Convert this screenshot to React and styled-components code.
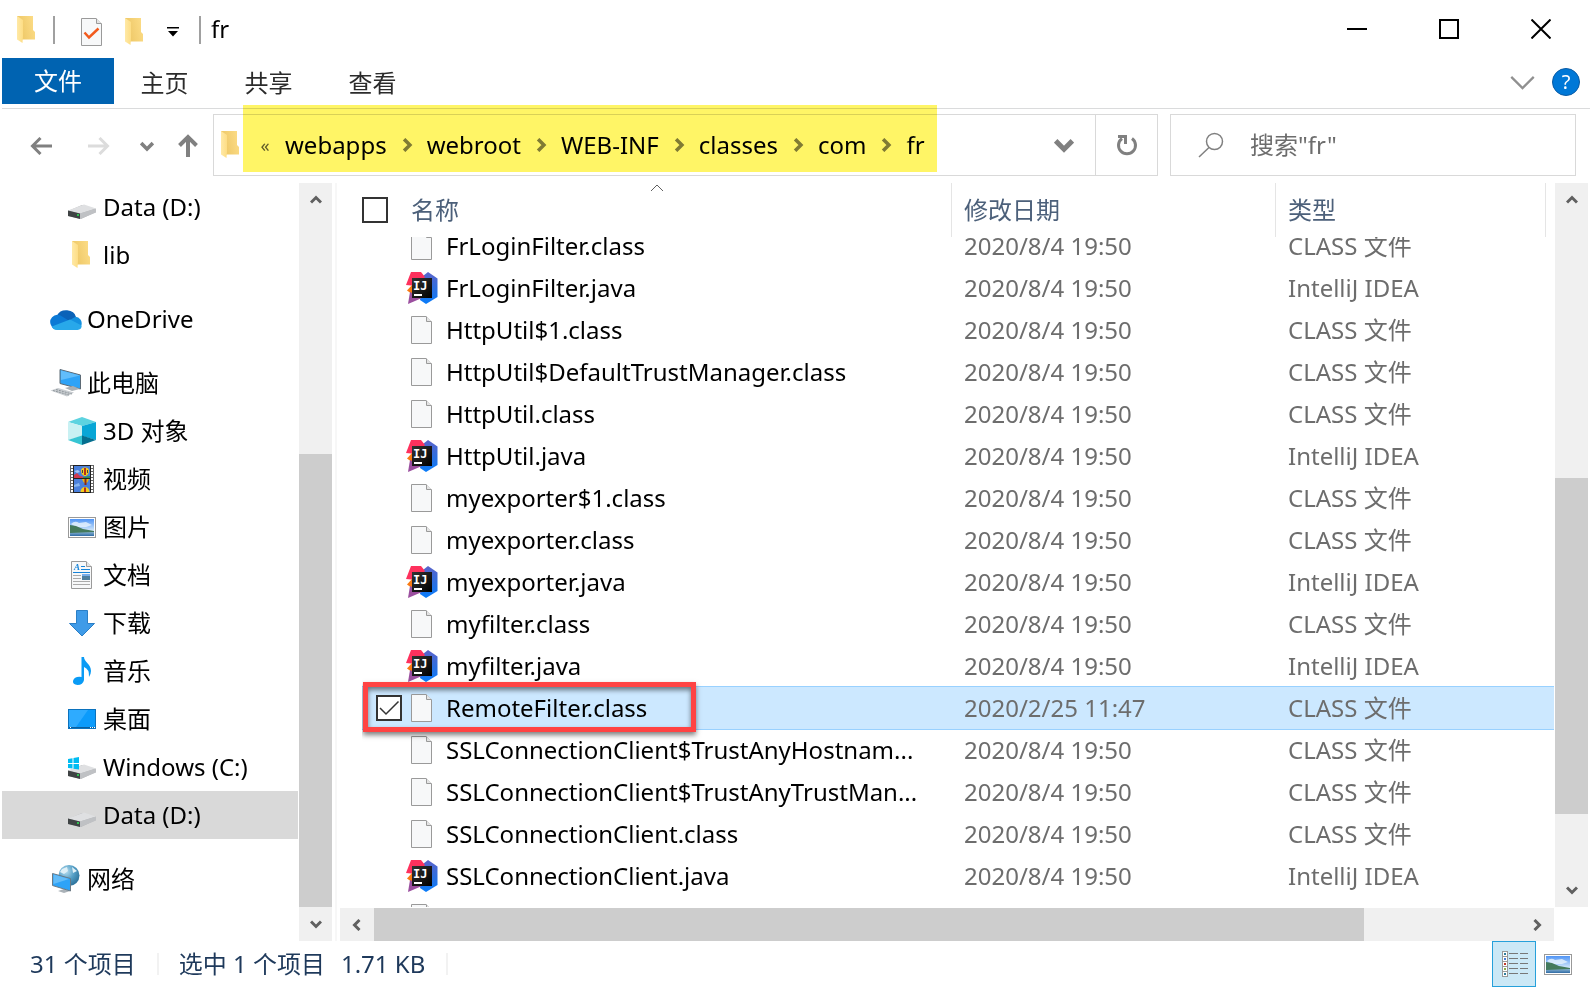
import React from "react";
import styled, { createGlobalStyle, css } from "styled-components";

const GlobalStyle = createGlobalStyle`
  * {
    box-sizing: border-box;
  }
  body {
    margin: 0;
    background: #fff;
    color: #000;
    font-family: "Noto Sans", "Noto Sans CJK SC", sans-serif;
    font-size: 24px;
    line-height: 32px;
  }
  button, input {
    font: inherit;
    color: inherit;
    margin: 0;
    padding: 0;
    border: 0;
    background: none;
  }
  ul, ol {
    list-style: none;
    margin: 0;
    padding: 0;
  }
  a {
    color: inherit;
    text-decoration: none;
  }
  svg {
    display: block;
    flex: none;
  }
`;

/* ---------- icons ---------- */

const FolderIcon = () => (
  <svg width="20" height="28" viewBox="0 0 20 28">
    <defs>
      <linearGradient id="folderBack" x1="0" x2="1" y1="0.6" y2="0.3">
        <stop offset="0" stopColor="#ecc563" />
        <stop offset="1" stopColor="#fcdc86" />
      </linearGradient>
      <linearGradient id="folderFront" x1="0" x2="1">
        <stop offset="0" stopColor="#ffe9a6" />
        <stop offset="1" stopColor="#fddd85" />
      </linearGradient>
    </defs>
    <path d="M0 0H16V14L18 16V23.500H5L0 20Z" fill="url(#folderBack)" />
    <path d="M0 0L6 4V20L5.500 27L0 23.500Z" fill="url(#folderFront)" />
  </svg>
);

const PageShape = () => (
  <>
    <path d="M0.500 0.500H15L20.500 6V27.500H0.500Z" fill="#f7f8f9" stroke="#9a9a9a" />
    <path d="M15.500 0.500V5.500H20.500" fill="#e4e4e4" stroke="#9a9a9a" />
  </>
);

const FileIcon = () => (
  <svg width="22" height="28" viewBox="0 0 22 28">
    <PageShape />
  </svg>
);

const CheckedPageIcon = () => (
  <svg width="21" height="28" viewBox="0 0 21 28">
    <PageShape />
    <path d="M3.500 14.500L8 19.500L17.500 10.500" fill="none" stroke="#f25a1d" strokeWidth="2.500" />
  </svg>
);

const IdeaIcon = () => (
  <svg width="32" height="32" viewBox="0 0 32 32">
    <defs>
      <linearGradient id="ideaBlue" x1="0" x2="0" y1="0" y2="1">
        <stop offset="0" stopColor="#5b63c9" />
        <stop offset="0.5" stopColor="#2f6fe0" />
        <stop offset="1" stopColor="#087cfa" />
      </linearGradient>
      <linearGradient id="ideaInk" x1="0" x2="1" y1="0" y2="1">
        <stop offset="0" stopColor="#333" />
        <stop offset="1" stopColor="#000" />
      </linearGradient>
    </defs>
    <path d="M17 4L22 0L31.500 6.500V25L20 32L14 28Z" fill="url(#ideaBlue)" />
    <path d="M5 0H15L19 5L10 14L0 13Z" fill="#fe315d" />
    <path d="M6 13L1 18.500L6 22Z" fill="#f97a12" />
    <path d="M4 20L2 32L16 26Z" fill="#9b4f9f" />
    <rect x="6" y="6" width="20" height="20" fill="url(#ideaInk)" />
    <text x="7" y="18" fill="#fff" fontFamily="DejaVu Sans Mono" fontWeight="700" fontSize="12">
      IJ
    </text>
    <rect x="8" y="22" width="8" height="2" fill="#fff" />
  </svg>
);

const DriveIcon = ({ windows }) => (
  <svg width="28" height="28" viewBox="0 0 28 28">
    <path d="M0 18L14 12L28 16V19L13 26L0 23Z" fill="#b5b7ba" />
    <path d="M0 17.500L16 11.500L28 15.500L12 20.500Z" fill="#dfe0e2" />
    <path d="M0 17.500L12 20.500V26L0 23Z" fill="#3f4344" />
    <path d="M12 20.500L28 15.500V19.500L12 26Z" fill="#bfc1c4" />
    <rect x="9" y="21" width="2" height="2" fill="#30c050" />
    {windows && (
      <path
        d="M0 6L4.500 5.200V10H0ZM5.500 5L11 4V10H5.500ZM0 11H4.500V15.500L0 15ZM5.500 11H11V16.500L5.500 15.700Z"
        fill="#00bcf2"
      />
    )}
  </svg>
);

const CloudIcon = () => (
  <svg width="32" height="21" viewBox="0 0 32 21">
    <path d="M7 6.500A10 8.500 0 0 1 26 8L19 14L5 9Z" fill="#0b62b8" />
    <path d="M1.500 17A7.200 7.200 0 0 1 10.500 6.500L21 13L6 20.500Q2.500 20 1.500 17Z" fill="#0b79d5" />
    <path d="M19 11.500L25.500 7.800A6.600 6.600 0 0 1 31.500 16L29 18Z" fill="#1490df" />
    <path d="M1.800 17.500L20 10.500L31.700 16.500A4.500 4.500 0 0 1 27.500 21H7Q3.500 21 1.800 17.500Z" fill="#28a8ea" />
  </svg>
);

const ComputerIcon = () => (
  <svg width="32" height="28" viewBox="0 0 32 28">
    <path d="M10 0.500L30.500 6V20L10 14.500Z" fill="#2ea3f7" stroke="#5d6a75" />
    <path d="M11 1.500L30 6.500L11 11Z" fill="#61bdfb" />
    <path d="M15 19L23 17L30 20L22 22Z" fill="#a9b0b5" />
    <path d="M0.500 21.500L8 19L24 23.500L17 27.500Z" fill="#c8ccd0" />
    <path d="M3 21.500L19 26M6 20.500L22 25" stroke="#8f979c" strokeDasharray="2 1" />
  </svg>
);

const CubeIcon = () => (
  <svg width="28" height="28" viewBox="0 0 28 28">
    <path d="M0 5L14 0L28 5L14 9Z" fill="#5dd3e0" />
    <path d="M0 5L14 9V19L0 23Z" fill="#c9f1f3" />
    <path d="M28 5L14 9V19L28 23Z" fill="#08a6d6" />
    <path d="M0 23L14 18.500V28Z" fill="#37c5d3" />
    <path d="M28 23L14 18.500V28Z" fill="#056f8f" />
  </svg>
);

const VideoIcon = () => (
  <svg width="28" height="28" viewBox="0 0 28 28">
    <rect x="2" width="24" height="28" fill="#666" />
    <path d="M4 1V28M24 1V28" stroke="#fff" strokeWidth="2" strokeDasharray="2 1" />
    <rect x="5" width="18" height="28" fill="#222" />
    <rect x="6" y="1" width="16" height="12" fill="#4a80dc" />
    <rect x="6" y="14" width="16" height="13" fill="#4a80dc" />
    <path d="M6 6L10 5L12 7L9 8Z" fill="#a4c6f6" />
    <path d="M6 10L9 8L12 11L16 12V13H6Z" fill="#d0384f" />
    <path d="M15 12L22 11V13H15Z" fill="#2f8f5a" />
    <path d="M13 6A4 3.500 0 0 1 21 6Q21 9 18 11H16Q13 9 13 6Z" fill="#f5cc1c" />
    <path d="M17 3V10" stroke="#b5301a" strokeWidth="2" />
    <path d="M14.500 5V8M19.500 5V8" stroke="#444" />
    <path d="M14 14H21Q20 17 18.500 18H16.500Q15 17 14 14Z" fill="#e8b418" />
    <path d="M17.500 14V20" stroke="#8a2b16" strokeWidth="2" />
    <path d="M6 20L11 18L12 21L6 22Z" fill="#86b4f0" />
    <path d="M12.500 27A4.500 5 0 0 1 21.500 27Z" fill="#f5cc1c" />
    <path d="M17 22.500V27" stroke="#b5301a" strokeWidth="2" />
  </svg>
);

const PictureIcon = () => (
  <svg width="28" height="21" viewBox="0 0 28 21">
    <defs>
      <linearGradient id="sky" x1="0" x2="0" y1="0" y2="1">
        <stop offset="0" stopColor="#4f94f5" />
        <stop offset="1" stopColor="#d7ebfb" />
      </linearGradient>
      <linearGradient id="lake" x1="0" x2="0" y1="0" y2="1">
        <stop offset="0" stopColor="#9fc5dd" />
        <stop offset="1" stopColor="#2f6ba5" />
      </linearGradient>
    </defs>
    <rect x="0.500" y="0.500" width="27" height="20" fill="#fff" stroke="#999" />
    <rect x="2" y="2" width="24" height="12" fill="url(#sky)" />
    <path d="M3 7Q7 3 11 6L18 5L24 8L18 10H8Z" fill="#e9f4fd" opacity="0.8" />
    <rect x="2" y="14" width="24" height="5" fill="url(#lake)" />
    <path d="M2 8L8 9L15 12L26 14V15L2 16Z" fill="#447a5c" />
  </svg>
);

const DocumentIcon = () => (
  <svg width="22" height="28" viewBox="0 0 22 28">
    <PageShape />
    <text x="3" y="9" fill="#1683d8" fontFamily="Liberation Serif" fontStyle="italic" fontWeight="700" fontSize="9">
      A
    </text>
    <path d="M10 5.500H14M10 8.500H19M2 11.500H19" stroke="#1683d8" />
    <path d="M2 14.500H10M2 17.500H10M2 20.500H19M2 23.500H19" stroke="#aaa" />
    <rect x="11" y="13" width="8" height="6" fill="#4f7f9f" />
    <rect x="11" y="13" width="8" height="2" fill="#79aeea" />
  </svg>
);

const DownloadIcon = () => (
  <svg width="28" height="28" viewBox="0 0 28 28">
    <path d="M8.500 1.500H19.500V14.500H26.500L14 27L1.500 14.500H8.500Z" fill="#3f9be8" stroke="#2b7fc6" />
  </svg>
);

const MusicIcon = () => (
  <svg width="28" height="28" viewBox="0 0 28 28">
    <path
      d="M13.500 0H16C16 5 23 7 23 14Q23 17 21 20Q21.500 12 16 10V23Q15 28 9.500 28Q4.500 27.500 5 24Q6.500 19 13.500 20Z"
      fill="#0a9bf5"
    />
  </svg>
);

const DesktopIcon = () => (
  <svg width="28" height="20" viewBox="0 0 28 20">
    <rect x="0.500" y="0.500" width="27" height="19" fill="#0c9bfb" stroke="#0b72bd" />
    <path d="M1 1H20L8 18H1Z" fill="#2eabff" />
    <path d="M1 18.500H27" stroke="#0a5f9e" />
    <path d="M2 18.500H3M22 18.500H23M24 18.500H25M26 18.500H27" stroke="#fff" />
  </svg>
);

const NetworkIcon = () => (
  <svg width="28" height="28" viewBox="0 0 28 28">
    <defs>
      <radialGradient id="globe" cx="0.35" cy="0.3" r="0.8">
        <stop offset="0" stopColor="#b9dff0" />
        <stop offset="0.5" stopColor="#559fc6" />
        <stop offset="1" stopColor="#256a93" />
      </radialGradient>
    </defs>
    <circle cx="17" cy="10.500" r="10.500" fill="url(#globe)" />
    <path d="M10 4L15 2L16 6L12 9L8 7ZM20 2L25 6L21 8Z" fill="#dff0f7" />
    <path d="M6 26L12 24L18 26L12 28Z" fill="#aab2b8" />
    <path d="M0.500 8.500L18.500 13.500V26L0.500 20.500Z" fill="#2ea3f7" stroke="#6b7a85" />
    <path d="M1.500 9.500L17 14L1.500 19Z" fill="#63bcf8" />
  </svg>
);

const Chevron = ({ turn = 0, size = 12, color = "#606060", weight = 3 }) => (
  <svg width={size} height={size} viewBox="0 0 12 12">
    <path
      d="M1 3.500L6 8.500L11 3.500"
      fill="none"
      stroke={color}
      strokeWidth={weight}
      transform={`rotate(${turn} 6 6)`}
    />
  </svg>
);

const BackArrow = () => (
  <svg width="22" height="18" viewBox="0 0 22 18">
    <path d="M22 9H3M10.500 1L2.500 9L10.500 17" fill="none" stroke="#808080" strokeWidth="3" />
  </svg>
);

const ForwardArrow = () => (
  <svg width="22" height="18" viewBox="0 0 22 18">
    <path d="M0 9H19M11.500 1L19.500 9L11.500 17" fill="none" stroke="#dcdcdc" strokeWidth="3" />
  </svg>
);

const UpArrow = () => (
  <svg width="20" height="24" viewBox="0 0 20 24">
    <path d="M10 23V3M1.500 11.500L10 3L18.500 11.500" fill="none" stroke="#808080" strokeWidth="4" />
  </svg>
);

const RefreshIcon = () => (
  <svg width="22" height="22" viewBox="0 0 22 22">
    <path d="M16 4.500A8.500 8.500 0 1 1 6 4.500" fill="none" stroke="#808080" strokeWidth="3" />
    <path d="M2 2.500H9.500V10" fill="none" stroke="#808080" strokeWidth="3" />
  </svg>
);

const SearchIcon = () => (
  <svg width="26" height="26" viewBox="0 0 26 26">
    <circle cx="16.500" cy="9.500" r="8" fill="none" stroke="#808080" strokeWidth="1.500" />
    <path d="M11 15.500L1 25" stroke="#808080" strokeWidth="1.500" />
  </svg>
);

const DetailsIcon = () => (
  <svg width="28" height="28" viewBox="0 0 28 28">
    {["#2f7f9f", "#4a7fd8", "#c0392b", "#8ab04a", "#2f7f9f"].map((c, i) => (
      <g key={i}>
        <rect x="2.500" y={1.5 + i * 5} width="5" height="5" fill="#fff" stroke="#999" />
        <rect x="4" y={3 + i * 5} width="2" height="2" fill={c} />
        <path d={`M9 ${3.5 + i * 5}H18M20 ${3.5 + i * 5}H28`} stroke="#777" />
      </g>
    ))}
  </svg>
);

/* ---------- window chrome ---------- */

const Window = styled.div`
  display: flex;
  flex-direction: column;
  height: 100vh;
  padding-left: 2px;
  overflow: hidden;
`;

const TitleBar = styled.header`
  display: flex;
  justify-content: space-between;
  height: 58px;
`;

const QuickAccess = styled.div`
  display: flex;
  align-items: center;
  padding: 2px 0 0 15px;
`;

const QuickButton = styled.button`
  display: flex;
  margin-left: ${({ $gap }) => $gap}px;
  padding-top: 4px;
`;

const Separator = styled.span`
  width: 2px;
  height: 28px;
  background: #a0a0a0;
  margin: 0 ${({ $after }) => $after}px 0 ${({ $before }) => $before}px;
`;

const WindowTitle = styled.h1`
  margin: 0;
  font-size: 24px;
  font-weight: 400;
  line-height: 32px;
  padding-bottom: 2px;
`;

const WindowButtons = styled.div`
  display: flex;
  padding-right: 3px;
`;

const WindowButton = styled.button`
  display: grid;
  place-items: center;
  width: 92px;
  height: 58px;
`;

const Ribbon = styled.nav`
  display: flex;
  height: 51px;
  border-bottom: 1px solid #dadbdc;
`;

const Tab = styled.button`
  width: ${({ $active }) => ($active ? 112 : 104)}px;
  height: ${({ $active }) => ($active ? 46 : 50)}px;
  padding-right: ${({ $active }) => ($active ? 0 : 3)}px;
  background: ${({ $active }) => ($active ? "#0063b1" : "transparent")};
  color: ${({ $active }) => ($active ? "#fff" : "#2b2b2b")};
`;

const RibbonTools = styled.div`
  display: flex;
  align-items: center;
  gap: 16px;
  margin-left: auto;
  padding: 0 10px 2px 0;
`;

const PlainButton = styled.button`
  display: grid;
  place-items: center;
`;

const HelpButton = styled.button`
  width: 28px;
  height: 28px;
  border: 1px solid #0a5ba5;
  border-radius: 50%;
  background: #0078d7;
  color: #fff;
  font-size: 20px;
  line-height: 26px;
`;

/* ---------- address row ---------- */

const AddressRow = styled.div`
  display: flex;
  align-items: center;
  height: 74px;
  padding: 0 14px 2px 0;
`;

const NavButtons = styled.div`
  display: flex;
  align-items: center;
  width: 211px;
  padding: 2px 0 0 28px;
`;

const NavButton = styled.button`
  display: grid;
  place-items: center;
  margin-right: ${({ $gap }) => $gap}px;
`;

const AddressBar = styled.div`
  display: flex;
  align-items: center;
  flex: 1 1 0;
  height: 62px;
  border: 1px solid #d9d9d9;
  padding-left: 7px;
`;

const Breadcrumb = styled.nav`
  position: relative;
  display: flex;
  align-items: center;
  height: 60px;
  margin-left: 2px;
  padding: 0 12px 0 17px;

  &::after {
    content: "";
    position: absolute;
    inset: -10px 0 3px 0;
    background: #fff566;
    mix-blend-mode: multiply;
    pointer-events: none;
  }
`;

const Overflow = styled.button`
  width: 10px;
  margin-right: 15px;
  color: #606060;
  font-size: 18px;
`;

const Crumbs = styled.ol`
  display: flex;
`;

const Crumb = styled.li`
  display: flex;
  align-items: center;

  svg {
    margin: 0 13px;
  }
`;

const AddressButton = styled.button`
  display: grid;
  place-items: center;
  align-self: stretch;
  width: 62px;
  border-left: ${({ $divided }) => ($divided ? "1px solid #d9d9d9" : "0")};
  margin-left: ${({ $push }) => ($push ? "auto" : "0")};
`;

const SearchBox = styled.label`
  display: flex;
  align-items: center;
  gap: 26px;
  width: 406px;
  height: 62px;
  margin-left: 12px;
  padding-left: 27px;
  border: 1px solid #d9d9d9;

  input {
    flex: 1;
    min-width: 0;
    outline: none;
  }
  input::placeholder {
    color: #6d6d6d;
    opacity: 1;
  }
`;

/* ---------- scroll bars ---------- */

const ScrollTrack = styled.div`
  display: flex;
  flex: none;
  flex-direction: ${({ $horizontal }) => ($horizontal ? "row" : "column")};
  background: #f0f0f0;
  ${({ $horizontal }) => ($horizontal ? "height: 33px;" : "width: 33px;")}
`;

const ScrollButton = styled.button`
  display: grid;
  place-items: center;
  flex: none;
  min-width: 33px;
  min-height: 33px;
  flex-basis: 34px;
`;

const ScrollPart = styled.div`
  flex: ${({ $size }) => $size} 1 0;
  background: ${({ $thumb }) => ($thumb ? "#cdcdcd" : "transparent")};
`;

const Scroller = ({ horizontal, before, thumb, after }) => (
  <ScrollTrack $horizontal={horizontal}>
    <ScrollButton aria-label="scroll back">
      <Chevron turn={horizontal ? 90 : 180} />
    </ScrollButton>
    <ScrollPart $size={before} />
    <ScrollPart $size={thumb} $thumb />
    <ScrollPart $size={after} />
    <ScrollButton aria-label="scroll forward">
      <Chevron turn={horizontal ? -90 : 0} />
    </ScrollButton>
  </ScrollTrack>
);

/* ---------- body ---------- */

const Body = styled.div`
  display: flex;
  flex: 1;
  min-height: 0;
`;

const Sidebar = styled.nav`
  display: flex;
  width: 335px;
  padding-right: 3px;
  border-right: 2px solid #f7f7f7;
`;

const Tree = styled.ul`
  flex: 1;
  margin-right: 1px;
  overflow: hidden;
`;

const TreeItem = styled.li`
  margin-top: ${({ $root }) => ($root ? 16 : 0)}px;

  a {
    display: flex;
    align-items: center;
    height: 48px;
    padding-left: ${({ $root }) => ($root ? 48 : 66)}px;
    gap: ${({ $root }) => ($root ? 5 : 7)}px;
    background: ${({ $current }) => ($current ? "#d9d9d9" : "transparent")};
  }
`;

const TreeIcon = styled.span`
  display: grid;
  place-items: center;
  width: ${({ $root }) => ($root ? 32 : 28)}px;
`;

const Main = styled.main`
  display: flex;
  flex: 1;
  flex-direction: column;
  gap: 1px;
  min-width: 0;
  padding: 0 2px 0 3px;
`;

const ListArea = styled.div`
  display: flex;
  flex: 1;
  gap: 1px;
  min-height: 0;
`;

const HorizontalArea = styled.div`
  padding-right: 34px;
`;

const Table = styled.table`
  display: flex;
  flex: 1;
  flex-direction: column;
  min-width: 0;
  padding-left: 22px;
`;

const columns = css`
  display: grid;
  grid-template-columns: minmax(0, 1fr) 324px 270px 8px;
`;

const TableHead = styled.thead`
  display: block;
  flex: none;

  tr {
    ${columns}
  }
`;

const HeadCell = styled.th`
  position: relative;
  display: flex;
  align-items: center;
  height: 54px;
  padding-left: ${({ $first }) => ($first ? 0 : 12)}px;
  border-right: 1px solid #e5e5e5;
  color: #4c607a;
  font-weight: 400;

  button {
    margin-left: ${({ $first }) => ($first ? 23 : 0)}px;
  }
`;

const SortMark = styled.span`
  position: absolute;
  top: 0;
  left: 50%;
  transform: translateX(-50%);
`;

const TableBody = styled.tbody`
  display: block;
  flex: 1;
  min-height: 0;
  overflow: hidden;

  tr:first-child {
    margin-top: -12px;
  }
`;

const Row = styled.tr`
  ${columns}
  position: relative;
  height: 42px;
  align-items: center;
  ${({ $selected }) =>
    $selected &&
    css`
      background: #cce8ff;
      box-shadow: 0 -1px #99d1ff, 0 1px #99d1ff;
    `}
`;

const Cell = styled.td`
  display: block;
  padding: 0 0 0 12px;
  color: #6d6d6d;
  white-space: nowrap;
`;

const NameCell = styled(Cell)`
  display: flex;
  align-items: center;
  padding-left: 14px;
  color: #000;
`;

const CheckSlot = styled.span`
  width: 30px;
`;

const IconSlot = styled.span`
  display: grid;
  place-items: center;
  width: 32px;
  margin-right: 8px;
`;

const Callout = styled.span`
  position: absolute;
  top: -5px;
  left: 1px;
  width: 333px;
  height: 50px;
  border: 5px solid #ff4343;
  box-shadow: 0 3px 5px rgba(0, 0, 0, 0.5), inset 0 3px 5px rgba(0, 0, 0, 0.5);
  pointer-events: none;
  z-index: 1;
`;

const CheckBoxWrap = styled.span`
  display: grid;
  width: 26px;
  height: 26px;

  input,
  svg {
    grid-area: 1 / 1;
  }
  input {
    appearance: none;
    width: 26px;
    height: 26px;
    border: 2px solid #333;
    background: #fff;
  }
  svg {
    pointer-events: none;
  }
`;

const CheckBox = ({ label, checked }) => (
  <CheckBoxWrap>
    <input type="checkbox" aria-label={label} defaultChecked={checked} />
    {checked && (
      <svg width="26" height="26" viewBox="0 0 26 26">
        <path d="M4 13L10 19L22.500 6.500" fill="none" stroke="#333" strokeWidth="1.500" />
      </svg>
    )}
  </CheckBoxWrap>
);

/* ---------- status bar ---------- */

const StatusBar = styled.footer`
  display: flex;
  height: 48px;
  color: #1e395b;
`;

const StatusText = styled.div`
  display: flex;
  align-items: center;
  gap: 16px;
  height: 22px;
  margin-top: 12px;
  padding: 0 21px 0 ${({ $first }) => ($first ? 28 : 20)}px;
  border-right: 2px solid #f2f2f2;
`;

const ViewButtons = styled.div`
  display: flex;
  margin-left: auto;
  padding-right: 10px;
`;

const ViewButton = styled.button`
  display: grid;
  place-items: center;
  width: 44px;
  height: 46px;
  border: 1px solid ${({ $active }) => ($active ? "#26a0da" : "transparent")};
  background: ${({ $active }) => ($active ? "#cbe8f6" : "transparent")};
`;

/* ---------- data ---------- */

const path = ["webapps", "webroot", "WEB-INF", "classes", "com", "fr"];

const tree = [
  { name: "Data (D:)", icon: <DriveIcon /> },
  { name: "lib", icon: <FolderIcon /> },
  { name: "OneDrive", icon: <CloudIcon />, root: true },
  { name: "此电脑", icon: <ComputerIcon />, root: true },
  { name: "3D 对象", icon: <CubeIcon /> },
  { name: "视频", icon: <VideoIcon /> },
  { name: "图片", icon: <PictureIcon /> },
  { name: "文档", icon: <DocumentIcon /> },
  { name: "下载", icon: <DownloadIcon /> },
  { name: "音乐", icon: <MusicIcon /> },
  { name: "桌面", icon: <DesktopIcon /> },
  { name: "Windows (C:)", icon: <DriveIcon windows /> },
  { name: "Data (D:)", icon: <DriveIcon />, current: true },
  { name: "网络", icon: <NetworkIcon />, root: true },
];

const files = [
  { name: "FrLoginFilter.class" },
  { name: "FrLoginFilter.java" },
  { name: "HttpUtil$1.class" },
  { name: "HttpUtil$DefaultTrustManager.class" },
  { name: "HttpUtil.class" },
  { name: "HttpUtil.java" },
  { name: "myexporter$1.class" },
  { name: "myexporter.class" },
  { name: "myexporter.java" },
  { name: "myfilter.class" },
  { name: "myfilter.java" },
  { name: "RemoteFilter.class", date: "2020/2/25 11:47", selected: true },
  { name: "SSLConnectionClient$TrustAnyHostnam..." },
  { name: "SSLConnectionClient$TrustAnyTrustMan..." },
  { name: "SSLConnectionClient.class" },
  { name: "SSLConnectionClient.java" },
];

const FileRow = ({ name, date = "2020/8/4 19:50", selected }) => {
  const isJava = name.endsWith(".java");
  return (
    <Row $selected={selected}>
      <NameCell>
        <CheckSlot>{selected && <CheckBox label={name} checked />}</CheckSlot>
        <IconSlot>{isJava ? <IdeaIcon /> : <FileIcon />}</IconSlot>
        {name}
        {selected && <Callout />}
      </NameCell>
      <Cell>{date}</Cell>
      <Cell>{isJava ? "IntelliJ IDEA" : "CLASS 文件"}</Cell>
    </Row>
  );
};

const App = () => {
  return (
    <Window>
      <GlobalStyle />

      <TitleBar>
        <QuickAccess>
          <FolderIcon />
          <Separator $before={16} $after={26} />
          <QuickButton aria-label="properties" $gap={0}>
            <CheckedPageIcon />
          </QuickButton>
          <QuickButton aria-label="new folder" $gap={23}>
            <FolderIcon />
          </QuickButton>
          <QuickButton aria-label="customize" $gap={22}>
            <svg width="12" height="10" viewBox="0 0 12 10">
              <path d="M0 0H12V1.500H0ZM1 4H11L6 9.500Z" />
            </svg>
          </QuickButton>
          <Separator $before={20} $after={10} />
          <WindowTitle>fr</WindowTitle>
        </QuickAccess>
        <WindowButtons>
          <WindowButton aria-label="minimize">
            <svg width="20" height="20" viewBox="0 0 20 20">
              <path d="M0 10H20" stroke="#000" strokeWidth="2" />
            </svg>
          </WindowButton>
          <WindowButton aria-label="maximize">
            <svg width="20" height="20" viewBox="0 0 20 20">
              <rect x="1" y="1" width="18" height="18" fill="none" stroke="#000" strokeWidth="2" />
            </svg>
          </WindowButton>
          <WindowButton aria-label="close">
            <svg width="20" height="20" viewBox="0 0 20 20">
              <path d="M0.500 0.500L19.500 19.500M19.500 0.500L0.500 19.500" stroke="#000" strokeWidth="2" />
            </svg>
          </WindowButton>
        </WindowButtons>
      </TitleBar>

      <Ribbon>
        <Tab $active>文件</Tab>
        <Tab>主页</Tab>
        <Tab>共享</Tab>
        <Tab>查看</Tab>
        <RibbonTools>
          <PlainButton aria-label="expand ribbon">
            <Chevron size={27} color="#909090" weight={1} />
          </PlainButton>
          <HelpButton>?</HelpButton>
        </RibbonTools>
      </Ribbon>

      <AddressRow>
        <NavButtons>
          <NavButton aria-label="back" $gap={36}>
            <BackArrow />
          </NavButton>
          <NavButton aria-label="forward" $gap={30}>
            <ForwardArrow />
          </NavButton>
          <NavButton aria-label="recent" $gap={24}>
            <Chevron color="#808080" size={14} />
          </NavButton>
          <NavButton aria-label="up" $gap={0}>
            <UpArrow />
          </NavButton>
        </NavButtons>
        <AddressBar>
          <FolderIcon />
          <Breadcrumb>
            <Overflow>«</Overflow>
            <Crumbs>
              {path.map((part, i) => (
                <Crumb key={part}>
                  <a href="#">{part}</a>
                  {i < path.length - 1 && (
                    <Chevron turn={-90} size={14} color="#808080" />
                  )}
                </Crumb>
              ))}
            </Crumbs>
          </Breadcrumb>
          <AddressButton aria-label="history" $push>
            <Chevron size={20} color="#808080" />
          </AddressButton>
          <AddressButton aria-label="refresh" $divided>
            <RefreshIcon />
          </AddressButton>
        </AddressBar>
        <SearchBox>
          <SearchIcon />
          <input type="text" aria-label="搜索" placeholder={'搜索"fr"'} />
        </SearchBox>
      </AddressRow>

      <Body>
        <Sidebar>
          <Tree>
            {tree.map(({ name, icon, root, current }, i) => (
              <TreeItem key={i} $root={root} $current={current}>
                <a href="#">
                  <TreeIcon $root={root}>{icon}</TreeIcon>
                  {name}
                </a>
              </TreeItem>
            ))}
          </Tree>
          <Scroller before={237} thumb={453} after={0} />
        </Sidebar>

        <Main>
          <ListArea>
            <Table>
              <TableHead>
                <tr>
                  <HeadCell $first>
                    <CheckBox label="全选" />
                    <button>名称</button>
                    <SortMark>
                      <svg width="14" height="10" viewBox="0 0 14 10">
                        <path d="M1 8L7 2L13 8" fill="none" stroke="#606060" />
                      </svg>
                    </SortMark>
                  </HeadCell>
                  <HeadCell>
                    <button>修改日期</button>
                  </HeadCell>
                  <HeadCell>
                    <button>类型</button>
                  </HeadCell>
                </tr>
              </TableHead>
              <TableBody>
                {files.map((file) => (
                  <FileRow key={file.name} {...file} />
                ))}
                {/* next file, only its top edge is in view */}
                <Row>
                  <NameCell>
                    <CheckSlot />
                    <IconSlot>
                      <FileIcon />
                    </IconSlot>
                  </NameCell>
                </Row>
              </TableBody>
            </Table>
            <Scroller before={261} thumb={336} after={59} />
          </ListArea>
          <HorizontalArea>
            <Scroller horizontal before={0} thumb={990} after={156} />
          </HorizontalArea>
        </Main>
      </Body>

      <StatusBar>
        <StatusText $first>31 个项目</StatusText>
        <StatusText>
          <span>选中 1 个项目</span>
          <span>1.71 KB</span>
        </StatusText>
        <ViewButtons>
          <ViewButton aria-label="details" $active>
            <DetailsIcon />
          </ViewButton>
          <ViewButton aria-label="large icons">
            <PictureIcon />
          </ViewButton>
        </ViewButtons>
      </StatusBar>
    </Window>
  );
};

export default App;
